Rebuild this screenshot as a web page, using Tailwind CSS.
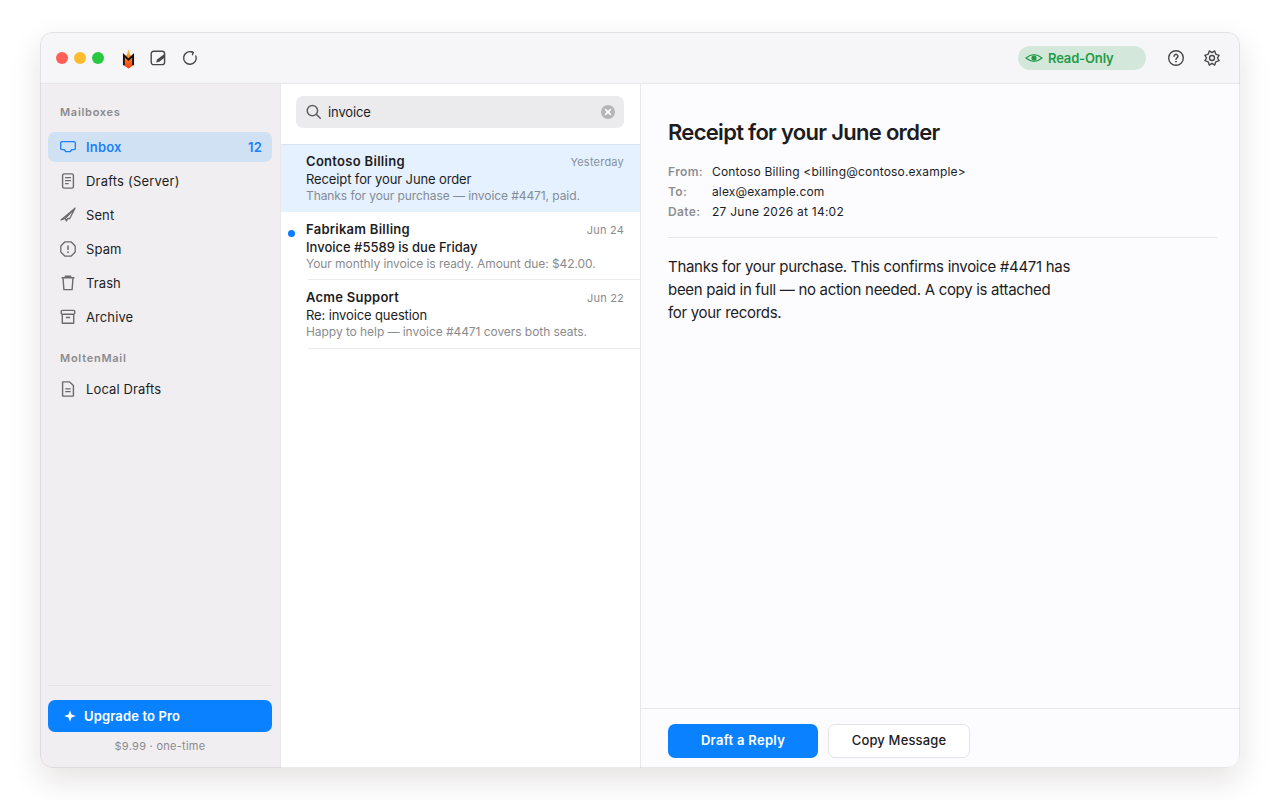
<!DOCTYPE html>
<html lang="en">
<head>
<meta charset="utf-8">
<title>MoltenMail</title>
<script src="https://cdn.jsdelivr.net/npm/@tailwindcss/browser@4"></script>
</head>
<body class="bg-white w-[1280px] h-[800px] overflow-hidden px-10 py-8 font-['Inter','Liberation_Sans',sans-serif] text-[13px] text-[#1d1d1f] antialiased">
<div class="relative w-[1200px] h-[736px] rounded-xl overflow-hidden flex flex-col bg-[#fcfcfe] shadow-[0_12px_32px_rgba(40,10,10,0.12)] after:absolute after:inset-0 after:rounded-xl after:border after:border-black/8 after:pointer-events-none">
  <header class="h-[52px] shrink-0 bg-[#f6f6f8] border-b border-[#e8e8ea] flex items-center pl-4 pr-5 text-[#48484c]">
    <div class="flex gap-1.5">
      <span class="size-3 rounded-full bg-[#ff5f57]"></span>
      <span class="size-3 rounded-full bg-[#febc2e]"></span>
      <span class="size-3 rounded-full bg-[#28c840]"></span>
    </div>
    <svg class="ml-4 mt-0.5" width="16" height="20" viewBox="0 0 16 20">
      <defs><linearGradient id="flame" x1="0" y1="0" x2="0" y2="1"><stop offset="0" stop-color="#ffc43a"/><stop offset=".5" stop-color="#ff7a1c"/><stop offset="1" stop-color="#ee3a16"/></linearGradient></defs>
      <path d="M8.5 0.5 L10.2 6 L12.8 8 V16.8 L8.5 19.5 L4.2 16.8 V8 L6.8 6 Z" fill="url(#flame)"/>
      <path d="M3.9 16.2V6.2L8.5 10.6 13.1 6.2V16.2" fill="none" stroke="#17110f" stroke-width="1.9"/>
    </svg>
    <svg class="ml-[14px]" width="16" height="16" viewBox="0 0 16 16" fill="none" stroke="currentColor" stroke-width="1.4">
      <rect x="1.2" y="1.2" width="13.4" height="13.4" rx="2.4"/><path d="M6.1 12.4l1-2.9 6.6-5.1 1 1v2.1l-5.4 4.2Z" fill="currentColor" stroke="none"/>
    </svg>
    <svg class="ml-4" width="16" height="16" viewBox="0 0 16 16" fill="none" stroke="currentColor" stroke-width="1.4" stroke-linecap="round">
      <path d="M10.5 2.2A6.3 6.3 0 1 0 13.9 5.9"/><path d="M8.7 1.6l2.6.8-.9 2.3"/>
    </svg>
    <div class="ml-auto w-32 h-6 rounded-full bg-[#d3e8db] flex items-center pl-[7px] gap-[5px] text-[#249b46] text-[13px] font-semibold">
      <svg width="18" height="14" viewBox="0 0 18 14" fill="none" stroke="currentColor" stroke-width="1.2"><path d="M1 7Q5 3.6 9 3.6T17 7Q13 10.4 9 10.4T1 7Z"/><circle cx="9" cy="7" r="2.6" fill="currentColor" stroke="none"/></svg>
      <span class="tracking-[-0.15px] pt-0.5">Read-Only</span>
    </div>
    <svg class="ml-[22px]" width="16" height="16" viewBox="0 0 16 16" fill="none" stroke="currentColor" stroke-width="1.4"><circle cx="8" cy="8" r="7.3"/><path d="M6.1 6.3a1.9 1.9 0 1 1 2.9 1.6C8.3 8.4 8 8.7 8 9.3" stroke-linecap="round" stroke-width="1.5"/><circle cx="8" cy="11.6" r=".9" fill="currentColor" stroke="none"/></svg>
    <svg class="ml-5" width="16" height="16" viewBox="0 0 16 16" fill="none" stroke="currentColor" stroke-width="1.4" stroke-linejoin="round"><path d="M8 2.6L10.7.9 11.8 4.2 15.1 5.3 13.4 8 15.1 10.7 11.8 11.8 10.7 15.1 8 13.4 5.3 15.1 4.2 11.8.9 10.7 2.6 8 .9 5.3 4.2 4.2 5.3.9Z"/><circle cx="8" cy="8" r="2.5"/></svg>
  </header>
  <div class="flex-1 flex min-h-0">
    <aside class="w-[241px] shrink-0 bg-[#f0eef1] border-r border-[#e9e8eb] px-2 flex flex-col">
      <h2 class="h-4 mt-5 px-3 text-[11px] leading-4 font-semibold tracking-[0.72px] text-[#8b8a8d]">Mailboxes</h2>
      <nav class="mt-3 flex flex-col gap-1 tracking-[0.1px]">
        <a class="h-[30px] rounded-[7px] bg-[#d0e1f3] px-3 pr-2.5 flex items-center gap-2.5 text-[#1a80fc] font-semibold tracking-[0.2px]">
          <svg width="16" height="16" viewBox="0 0 16 16" fill="none" stroke="currentColor" stroke-width="1.3" stroke-linejoin="round"><path d="M2 2.6H14Q15.3 2.6 15.3 4V9.6Q15.3 10.6 14.3 10.6H11.6L10.3 12.6H5.7L4.4 10.6H1.7Q.7 10.6.7 9.6V4Q.7 2.6 2 2.6Z"/></svg>
          <span class="pt-0.5">Inbox</span><span class="ml-auto pt-px">12</span>
        </a>
        <a class="h-[30px] px-3 flex items-center gap-2.5">
          <svg class="text-[#6b6b6e]" width="16" height="16" viewBox="0 0 16 16" fill="none" stroke="currentColor" stroke-width="1.4"><rect x="2.6" y=".9" width="10.8" height="14.2" rx="1.6"/><path d="M5 4.7h6M5 7.7h6M5 10.7h3.6" stroke-width="1.2"/></svg>
          <span class="pt-0.5 tracking-[0.2px]">Drafts (Server)</span>
        </a>
        <a class="h-[30px] px-3 flex items-center gap-2.5">
          <svg class="text-[#6b6b6e]" width="16" height="16" viewBox="0 0 16 16" fill="none" stroke="currentColor" stroke-width="1.3" stroke-linejoin="round"><path d="M15 1.2L1 12.9 5.3 11.4 6.4 14 7.8 11.4 9.6 11.7Z M15 1.2L5.3 11.4"/></svg>
          <span class="pt-0.5">Sent</span>
        </a>
        <a class="h-[30px] px-3 flex items-center gap-2.5">
          <svg class="text-[#6b6b6e]" width="16" height="16" viewBox="0 0 16 16" fill="none" stroke="currentColor" stroke-width="1.3" stroke-linejoin="round"><path d="M5 .8H11L15.2 5V11L11 15.2H5L.8 11V5Z"/><path d="M8 4.5V8.9" stroke-width="1.5"/><circle cx="8" cy="11.2" r=".9" fill="currentColor" stroke="none"/></svg>
          <span class="pt-0.5">Spam</span>
        </a>
        <a class="h-[30px] px-3 flex items-center gap-2.5">
          <svg class="text-[#6b6b6e]" width="16" height="16" viewBox="0 0 16 16" fill="none" stroke="currentColor" stroke-width="1.4" stroke-linejoin="round"><path d="M1.6 2.7H14.4M5.3 2.7V1.2H10.7V2.7M3 2.7L3.9 14.6H12.1L13 2.7"/></svg>
          <span class="pt-0.5">Trash</span>
        </a>
        <a class="h-[30px] px-3 flex items-center gap-2.5">
          <svg class="text-[#6b6b6e]" width="16" height="16" viewBox="0 0 16 16" fill="none" stroke="currentColor" stroke-width="1.4" stroke-linejoin="round"><rect x="1.2" y="1.4" width="13.6" height="3.8" rx="1.1"/><path d="M2.3 5.2V14.2H13.7V5.2M5.9 8.5h4.2"/></svg>
          <span class="pt-0.5">Archive</span>
        </a>
      </nav>
      <h2 class="h-4 mt-[18px] px-3 text-[11px] leading-4 font-semibold tracking-[0.75px] text-[#8b8a8d]">MoltenMail</h2>
      <a class="mt-2 h-[30px] px-3 flex items-center gap-2.5">
        <svg class="text-[#6b6b6e]" width="16" height="16" viewBox="0 0 16 16" fill="none" stroke="currentColor" stroke-width="1.4" stroke-linejoin="round"><path d="M2.6.9H9.6L13.4 4.5V15.1H2.6Z"/><path d="M5.3 7.9h5.4M5.3 10.7h5.4" stroke-width="1.2"/></svg>
        <span class="pt-0.5 tracking-[0.13px]">Local Drafts</span>
      </a>
      <div class="mt-auto border-t border-[#e5e3e6] pt-[14px] pb-[14px]">
        <button class="w-full h-8 rounded-[7px] bg-[#0a82ff] text-white font-semibold flex items-center pl-4 gap-2">
          <svg width="12" height="12" viewBox="0 0 12 12" fill="currentColor"><path d="M6 .2L7.5 4.5 11.8 6 7.5 7.5 6 11.8 4.5 7.5.2 6 4.5 4.5Z"/></svg>
          <span class="pt-0.5 tracking-[0.13px]">Upgrade to Pro</span>
        </button>
        <p class="mt-1.5 h-4 leading-4 text-[11px] text-center text-[#8b8a8d] tracking-[0.27px]">$9.99 · one-time</p>
      </div>
    </aside>
    <section class="w-[360px] shrink-0 bg-white border-r border-[#e8e8ea]">
      <div class="h-[60px] pt-3 pl-[15px] pr-4">
        <div class="h-8 rounded-[7px] bg-[#ebebed] flex items-center pl-2.5 pr-[9px]">
          <svg class="text-[#5f5f63]" width="16" height="16" viewBox="0 0 16 16" fill="none" stroke="currentColor" stroke-width="1.5" stroke-linecap="round"><circle cx="6.4" cy="6.6" r="5.2"/><path d="M10.3 10.4l4 3.8"/></svg>
          <span class="ml-1.5 pt-0.5 tracking-[-0.12px]">invoice</span>
          <svg class="ml-auto" width="14" height="14" viewBox="0 0 14 14"><circle cx="7" cy="7" r="7" fill="#b5b5b7"/><path d="M4.6 4.6l4.8 4.8M9.4 4.6l-4.8 4.8" stroke="#fff" stroke-width="1.6" stroke-linecap="round"/></svg>
        </div>
      </div>
      <article class="h-[68px] border-t border-[#d9e3ee] bg-[#e5f1fe] pl-[25px] pr-4 pt-2">
        <div class="h-[18px] flex justify-between items-center"><b class="font-semibold tracking-[0.3px]">Contoso Billing</b><time class="text-[11px] tracking-[0.22px] text-[#8590a0]">Yesterday</time></div>
        <p class="h-[17px] leading-4 tracking-[-0.12px]">Receipt for your June order</p>
        <p class="h-[15px] leading-[15px] text-xs tracking-[-0.08px] text-[#848c96]">Thanks for your purchase — invoice #4471, paid.</p>
      </article>
      <article class="relative h-[68px] pl-[25px] pr-4 pt-[9px]">
        <span class="absolute left-[7px] top-[18px] size-[7px] rounded-full bg-[#0a7cff]"></span>
        <div class="h-[18px] flex justify-between items-center"><b class="font-semibold tracking-[0.26px]">Fabrikam Billing</b><time class="text-[11px] tracking-[0.2px] text-[#8b8b8e]">Jun 24</time></div>
        <p class="h-[17px] leading-4 font-medium">Invoice #5589 is due Friday</p>
        <p class="h-[15px] leading-[15px] text-xs tracking-[-0.07px] text-[#8b8b8e]">Your monthly invoice is ready. Amount due: $42.00.</p>
      </article>
      <div class="ml-[27px] h-px bg-[#ececee] -mt-px"></div>
      <article class="h-[68px] pl-[25px] pr-4 pt-[9px]">
        <div class="h-[18px] flex justify-between items-center"><b class="font-semibold tracking-[0.25px]">Acme Support</b><time class="text-[11px] tracking-[0.2px] text-[#8b8b8e]">Jun 22</time></div>
        <p class="h-[17px] leading-4 tracking-[-0.12px]">Re: invoice question</p>
        <p class="h-[15px] leading-[15px] text-xs tracking-[-0.06px] text-[#8b8b8e]">Happy to help — invoice #4471 covers both seats.</p>
      </article>
      <div class="ml-[27px] h-px bg-[#ececee]"></div>
    </section>
    <main class="flex-1 flex flex-col">
      <div class="flex-1 pl-[27px] pr-[23px] pt-[34px]">
        <h1 class="h-7 leading-7 text-[22px] font-semibold tracking-[-0.7px]">Receipt for your June order</h1>
        <dl class="mt-4 grid grid-cols-[44px_1fr] text-xs leading-5 tracking-[0.19px]">
          <dt class="font-semibold tracking-[0.35px] text-[#8e8e92]">From:</dt><dd>Contoso Billing &lt;billing@contoso.example&gt;</dd>
          <dt class="font-semibold tracking-[0.35px] text-[#8e8e92]">To:</dt><dd class="tracking-[0.13px]">alex@example.com</dd>
          <dt class="font-semibold tracking-[0.35px] text-[#8e8e92]">Date:</dt><dd class="tracking-[0.24px]">27 June 2026 at 14:02</dd>
        </dl>
        <hr class="mt-[15px] border-[#e8e8ea]">
        <p class="mt-[17px] text-[15px] leading-[23px] tracking-[-0.3px]">Thanks for your purchase. This confirms invoice #4471 has<br>been paid in full — no action needed. A copy is attached<br>for your records.</p>
      </div>
      <footer class="h-[60px] border-t border-[#e8e8ea] flex items-center gap-2.5 pl-[27px] pt-1">
        <button class="w-[150px] h-[34px] rounded-[7px] bg-[#0a82ff] text-white font-semibold tracking-[0.3px]">Draft a Reply</button>
        <button class="w-[142px] h-[34px] rounded-[7px] bg-white border border-[#e4e4e7] font-medium tracking-[0.15px]">Copy Message</button>
      </footer>
    </main>
  </div>
</div>
</body>
</html>
